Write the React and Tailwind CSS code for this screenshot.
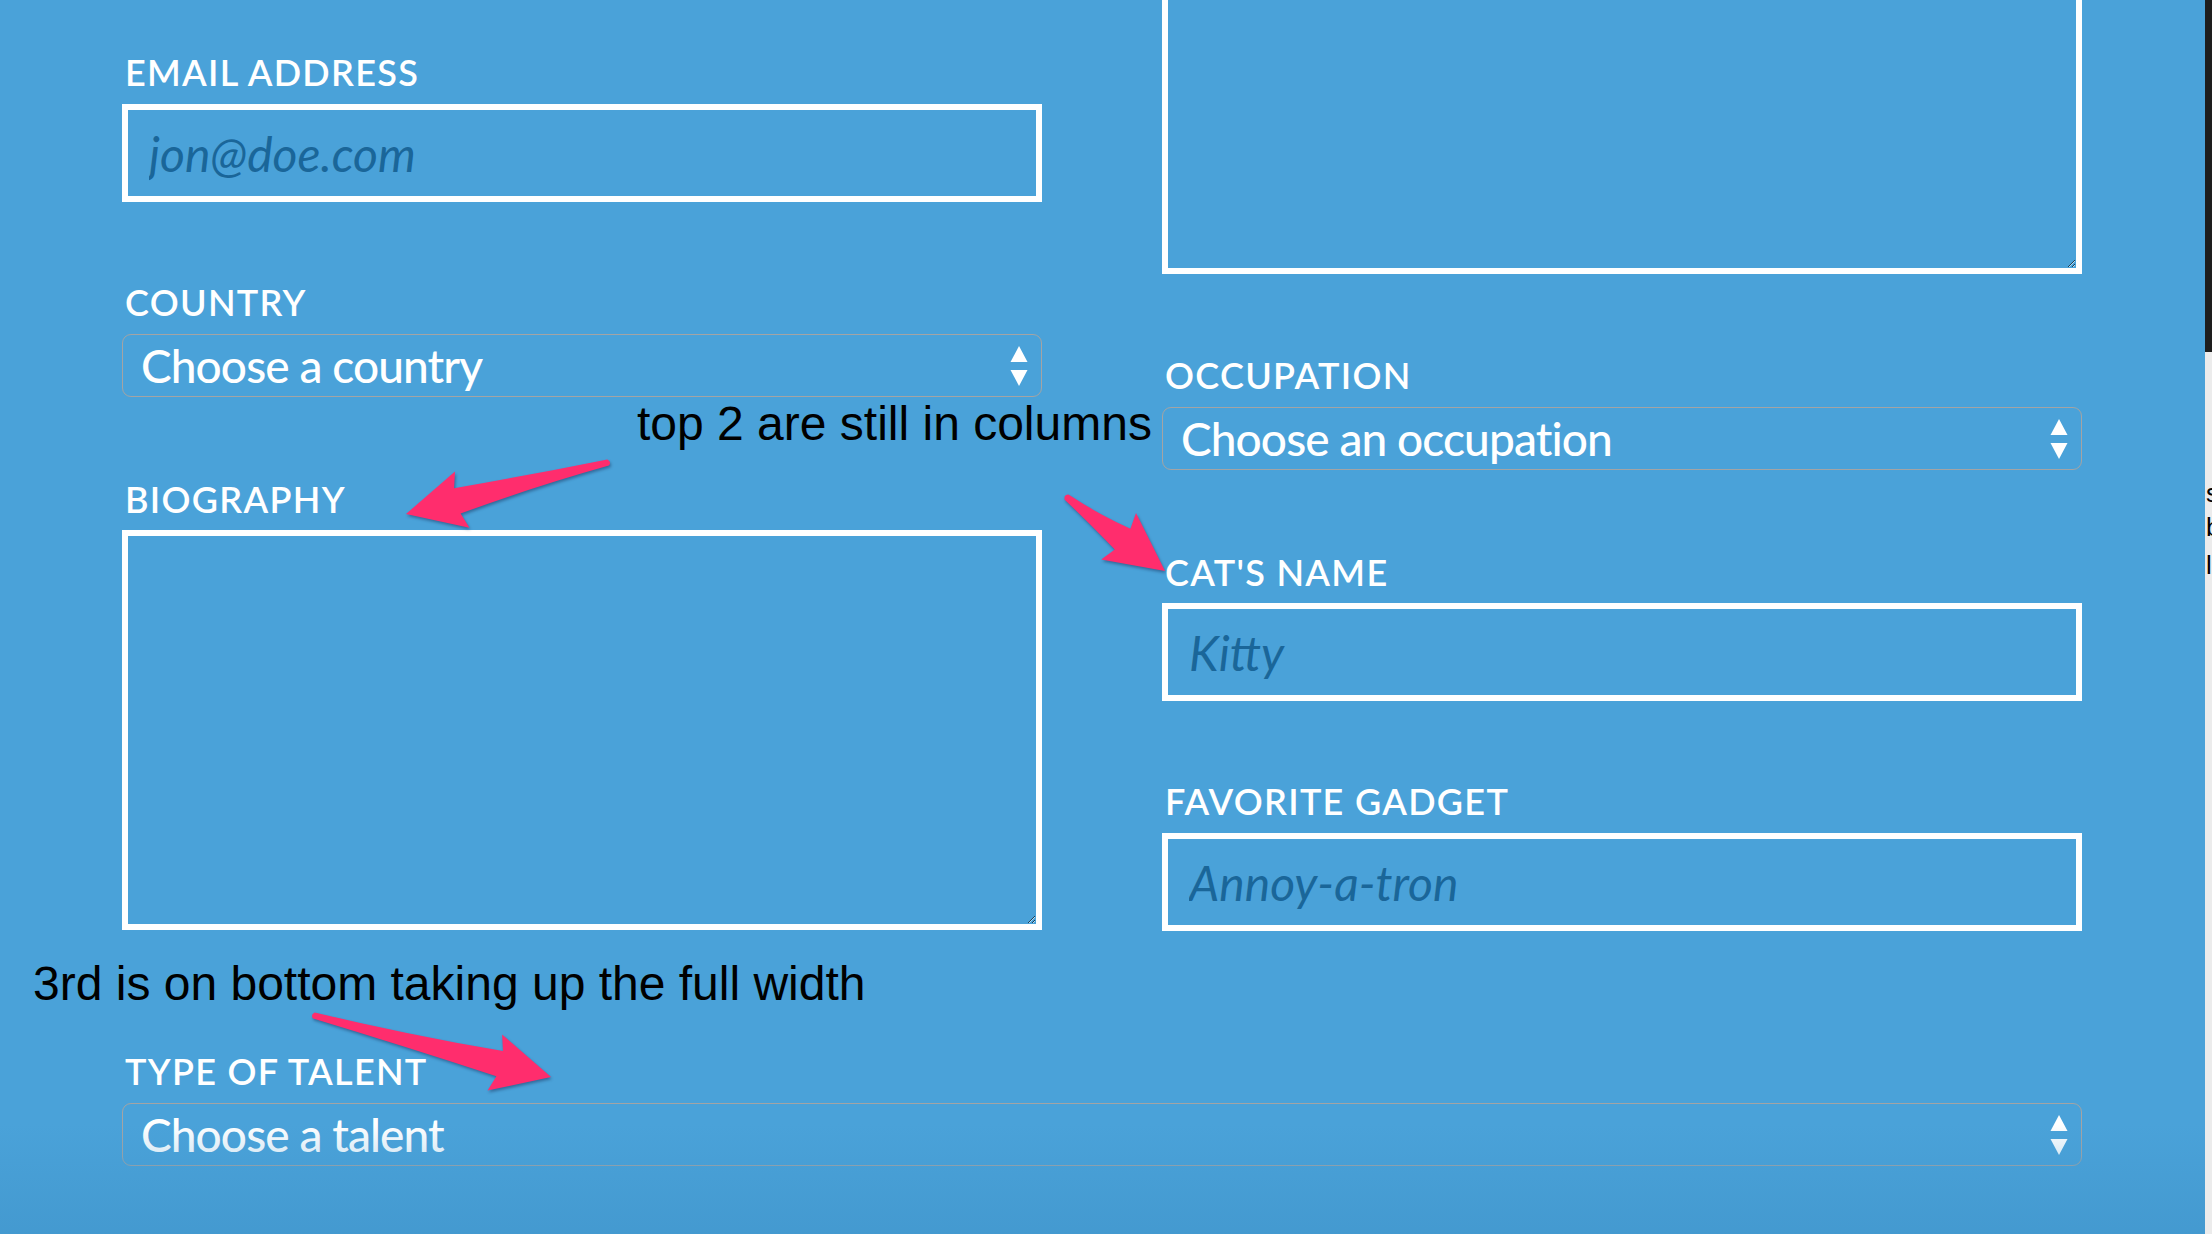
import React from "react";

function arrowPath(tail, tip) {
  const dx = tip[0] - tail[0];
  const dy = tip[1] - tail[1];
  const L = Math.hypot(dx, dy);
  const u = [dx / L, dy / L];
  const p = [-u[1], u[0]];
  const P = (a, b) => {
    const x = tip[0] - a * u[0] + b * p[0];
    const y = tip[1] - a * u[1] + b * p[1];
    return `${x.toFixed(1)} ${y.toFixed(1)}`;
  };
  const mid = (L + 54) / 2;
  return [
    `M ${P(0, 0)}`,
    `L ${P(58, 29)}`,
    `L ${P(53, 13)}`,
    `Q ${P(mid, 7)} ${P(L - 2, 3.2)}`,
    `Q ${P(L + 2, 0)} ${P(L - 2, -3.2)}`,
    `Q ${P(mid, -5)} ${P(53, -13)}`,
    `L ${P(58, -29)}`,
    "Z",
  ].join(" ");
}

function Label({ children, className = "" }) {
  return (
    <div
      className={
        "block h-[36px] pl-[3px] text-[36px] font-semibold leading-none tracking-[1.3px] text-white uppercase whitespace-nowrap " +
        className
      }
    >
      {children}
    </div>
  );
}

function TextInput({ placeholder, className = "" }) {
  return (
    <input
      type="text"
      placeholder={placeholder}
      className={
        "block h-[98px] w-full border-[6px] border-white bg-transparent pl-[21px] pr-[17px] text-[48px] text-white outline-none placeholder:italic placeholder:text-[#1a6699] " +
        className
      }
    />
  );
}

function Select({ text, className = "" }) {
  return (
    <div
      className={
        "flex h-[63px] w-full items-center justify-between rounded-[9px] border border-[#a4a4a4] pl-[18px] pr-[13px] text-[46px] font-medium tracking-[-0.9px] text-white " +
        className
      }
    >
      <span className="leading-[1.2] whitespace-nowrap">{text}</span>
      <svg width="18" height="40" viewBox="0 0 18 40" className="shrink-0">
        <polygon points="9,0 17.5,16 0.5,16" fill="#ffffff" />
        <polygon points="0.5,24 17.5,24 9,40" fill="#ffffff" />
      </svg>
    </div>
  );
}

function TextArea({ className = "" }) {
  return (
    <textarea
      className={
        "block w-full resize-y border-[6px] border-white bg-transparent outline-none " +
        className
      }
    />
  );
}

export default function App() {
  const arrows = [
    arrowPath([610, 462], [406, 514]),
    arrowPath([1065, 496], [1165, 571]),
    arrowPath([312, 1015], [551, 1077]),
  ];

  return (
    <div className="relative flex h-[1234px] w-[2212px] overflow-hidden bg-[#4aa2d9] font-['Lato',sans-serif]">
      <div className="relative flex-1">
        <div className="pl-[122px]">
          <div className="grid grid-cols-[920px_920px] gap-x-[120px]">
            {/* left column */}
            <div className="flex flex-col pt-[54px]">
              <Label>Email Address</Label>
              <TextInput placeholder="jon@doe.com" className="mt-[14px]" />
              <Label className="mt-[82px]">Country</Label>
              <Select text="Choose a country" className="mt-[14px]" />
              <Label className="mt-[84px]">Biography</Label>
              <TextArea className="mt-[13px] h-[400px]" />
            </div>
            {/* right column */}
            <div className="flex flex-col">
              <TextArea className="h-[274px] border-t-0" />
              <Label className="mt-[83px]">Occupation</Label>
              <Select text="Choose an occupation" className="mt-[14px] h-[62px]" />
              <Label className="mt-[84px]">Cat's Name</Label>
              <TextInput placeholder="Kitty" className="mt-[13px]" />
              <Label className="mt-[82px]">Favorite Gadget</Label>
              <TextInput placeholder="Annoy-a-tron" className="mt-[14px]" />
            </div>
          </div>
          <div className="mt-[122px] w-[1960px]">
            <Label>Type of Talent</Label>
            <Select text="Choose a talent" className="mt-[14px]" />
          </div>
        </div>

        {/* bottom shading */}
        <div className="pointer-events-none absolute inset-x-0 bottom-0 h-[110px] bg-linear-to-b from-transparent to-[#4196cc]/70" />

        {/* annotations */}
        <div className="pointer-events-none absolute left-[637px] top-[400px] whitespace-nowrap font-['Liberation_Sans',Arial,sans-serif] text-[48px] leading-none text-black">
          top 2 are still in columns
        </div>
        <div className="pointer-events-none absolute left-[33px] top-[960px] whitespace-nowrap font-['Liberation_Sans',Arial,sans-serif] text-[48px] leading-none text-black">
          3rd is on bottom taking up the full width
        </div>
        <svg
          className="pointer-events-none absolute left-0 top-0 drop-shadow-[1px_2px_1.5px_rgba(20,40,80,0.45)]"
          width="2205"
          height="1234"
          viewBox="0 0 2205 1234"
        >
          {arrows.map((d, i) => (
            <path key={i} d={d} fill="#ff2d6d" />
          ))}
        </svg>
      </div>

      {/* right edge strip */}
      <div className="flex w-[7px] shrink-0 flex-col">
        <div className="h-[352px] bg-[#1e1e1e]" />
        <div className="relative flex-1 overflow-hidden bg-[#ececec] font-['Liberation_Sans',Arial,sans-serif] text-[26px] leading-none text-black">
          <div className="absolute left-[1px] top-[128px]">s</div>
          <div className="absolute left-[1px] top-[162px]">b</div>
          <div className="absolute left-[1px] top-[200px]">l</div>
        </div>
      </div>
    </div>
  );
}
